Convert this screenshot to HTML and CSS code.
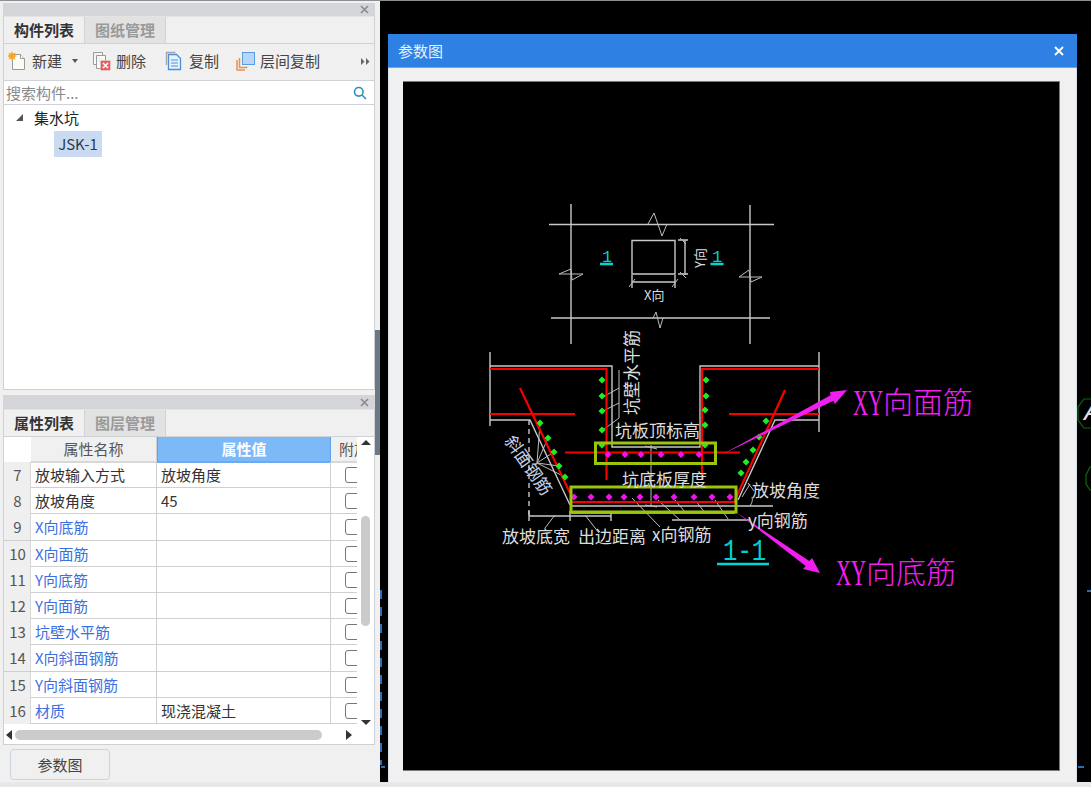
FILE: index.html
```html
<!DOCTYPE html>
<html lang="zh-CN">
<head>
<meta charset="utf-8">
<title>参数图</title>
<link rel="stylesheet" href="styles.css">
</head>
<body>
<div class="app">
  <div class="main">
    <aside class="left">
      <section class="panel panel-top">
        <div class="strip"><svg class="close" viewBox="0 0 9 9"><path d="M1 1l7 7M8 1l-7 7"/></svg></div>
        <div class="tabs"><div class="tab on">构件列表</div><div class="tab off">图纸管理</div></div>
        <div class="toolbar">
          <svg class="ic ic-new" viewBox="0 0 20 20"><path class="doc" d="M4.500 3.500h8l4 4v11h-12z"/><path class="doc" d="M12.500 3.500v4h4"/><path class="star" d="M4 0l1 2.500 2.500-1-1 2.500 2.500 1-2.500 1 1 2.500-2.500-1-1 2.500-1-2.500-2.500 1 1-2.500-2.500-1 2.500-1-1-2.500 2.500 1z"/></svg>
          <span class="tl t-new">新建</span>
          <i class="caret"></i>
          <svg class="ic ic-del" viewBox="0 0 20 20"><path class="doc" d="M1.500 1.500h9v3"/><path class="doc" d="M1.500 1.500v12h3"/><path class="doc" d="M4.500 4.500h9v5M4.500 4.500v13h4"/><rect class="xbox" x="9" y="10" width="9" height="9"/><path class="xmark" d="M11 12l5 5M16 12l-5 5"/></svg>
          <span class="tl t-del">删除</span>
          <svg class="ic ic-copy" viewBox="0 0 20 20"><path class="grey" d="M1.500 14V1.500h9"/><path class="blue" d="M3.500 3.500h8l4 4v11h-12z"/><path class="blue thin" d="M6 9h7M6 12h7M6 15h7"/></svg>
          <span class="tl t-copy">复制</span>
          <svg class="ic ic-floor" viewBox="0 0 20 20"><path class="orange" d="M1 9v10h8M3.500 7v9.500h8"/><rect class="bsq" x="6.500" y="1.500" width="12" height="12"/></svg>
          <span class="tl t-floor">层间复制</span>
          <svg class="more" viewBox="0 0 9 7"><path d="M0 0l3.500 3.500-3.500 3.500zM5 0l3.500 3.500-3.500 3.500z"/></svg>
        </div>
        <div class="search">
          <span class="ph">搜索构件...</span>
          <svg class="mag" viewBox="0 0 14 14"><circle cx="5.800" cy="5.800" r="4.300"/><path d="M9 9l4 4"/></svg>
        </div>
        <div class="tree">
          <div class="node"><i class="tri"></i><span>集水坑</span></div>
          <div class="leaf">JSK-1</div>
        </div>
      </section>

      <section class="panel panel-prop">
        <div class="strip strip-prop"><svg class="close" viewBox="0 0 9 9"><path d="M1 1l7 7M8 1l-7 7"/></svg></div>
        <div class="tabs"><div class="tab on">属性列表</div><div class="tab off">图层管理</div></div>
        <div class="grid-wrap">
          <div class="grid">
            <div class="hrow">
              <div class="h-blank"></div>
              <div class="h-name">属性名称</div>
              <div class="h-val">属性值</div>
              <div class="h-att">附加</div>
            </div>
            <div class="row"><div class="n">7</div><div class="k">放坡输入方式</div><div class="v">放坡角度</div><div class="c"><i></i></div></div>
            <div class="row"><div class="n">8</div><div class="k">放坡角度</div><div class="v">45</div><div class="c"><i></i></div></div>
            <div class="row"><div class="n">9</div><div class="k link">X向底筋</div><div class="v"></div><div class="c"><i></i></div></div>
            <div class="row"><div class="n">10</div><div class="k link">X向面筋</div><div class="v"></div><div class="c"><i></i></div></div>
            <div class="row"><div class="n">11</div><div class="k link">Y向底筋</div><div class="v"></div><div class="c"><i></i></div></div>
            <div class="row"><div class="n">12</div><div class="k link">Y向面筋</div><div class="v"></div><div class="c"><i></i></div></div>
            <div class="row"><div class="n">13</div><div class="k link">坑壁水平筋</div><div class="v"></div><div class="c"><i></i></div></div>
            <div class="row"><div class="n">14</div><div class="k link">X向斜面钢筋</div><div class="v"></div><div class="c"><i></i></div></div>
            <div class="row"><div class="n">15</div><div class="k link">Y向斜面钢筋</div><div class="v"></div><div class="c"><i></i></div></div>
            <div class="row"><div class="n">16</div><div class="k link">材质</div><div class="v">现浇混凝土</div><div class="c"><i></i></div></div>
          </div>
          <div class="vscroll"><i class="up"></i><div class="vtrack"><div class="vthumb"></div></div><i class="down"></i></div>
        </div>
        <div class="hscroll"><i class="lf"></i><div class="hthumb"></div><i class="rt"></i></div>
      </section>

      <div class="btn-row"><button class="btn">参数图</button></div>
      <div class="splitter"></div>
    </aside>

    <div class="canvas">
      <svg class="bg" viewBox="380 1 711 781">
        <path class="tick" stroke-dasharray="9 8" d="M381 590V765"/>
        <path class="tick" d="M381 767h4M1078 767h6M1087 591h4"/>
        <path class="hex" d="M1091 399l-7 0-6 8v13l6 8h7"/>
        <path class="hex" d="M1091 467l-1 0-4 8v9l4 6h1"/>
        <text class="cad-a" x="1084" y="420">A</text>
      </svg>
      <div class="dialog">
        <header class="dlg-title"><span>参数图</span><svg class="dlg-x" viewBox="0 0 10 10"><path d="M1 1l8 8M9 1l-8 8"/></svg></header>
        <div class="dlg-body">
          <div class="view">
            <svg class="cad" viewBox="403 81 657 690">
              <defs><path id="dm" d="M0-3.500L3.500 0 0 3.500-3.500 0z"/></defs>

              <g class="ln">
                <path d="M571 204V344M750 205V344M549 224.500H774M551 318H770"/>
                <path d="M632 240.500H675V274H632z"/>
                <path d="M685 240V275M678 240H688M678 274H688M632 275V288M675 275V288M632 282H675"/>
                <path class="hair" d="M680 238l6 6M680 272l6 6M629 287l6-8M672 287l6-8"/>
                <path class="hair" d="M648 224l6-11 8 23 5-12M653 318l3-6 4 16 3-10M559 274l12-5 1 11 11-6M559 274H583M739 277l10-7 2 12 11-5M739 277H762"/>

                <path d="M490 352V426M490 366H612V447H700V366H819M819 352V432"/>
                <path d="M490 420H530L570 505"/>
                <path d="M819 420H775L738 500"/>
                <path d="M529 420V515" stroke-dasharray="5 4"/>
                <path d="M571 506H773M571 513H735M672 520H750M529 516H611M529 511V521M570 511V521M611 511V521"/>
                <path class="hair" d="M619 370V418M603 397l16-9M603 411l16-8M603 430l16-12"/>
                <path class="hair" d="M651 445V506M645 446l12 3M645 505l12 2"/>
                <path class="hair" d="M537 463L540 423M537 463L548 438M537 463L554 452M537 463L559 466M537 463L565 477"/>
                <path class="hair" d="M555 515l-10 13M585 515l14 18M632 498l28 29M658 500l22 20M675 500l10 12M696 501l9 12M715 500l13 19"/>
                <path class="hair" d="M742 497l8-13M748 483l6 8M750 506c2-3 3-6 2-9"/>
              </g>

              <g class="red">
                <path d="M490 369H606.500V480M490 414H575M520 388L570 493M571 502H734L785 390M819 369H702V480M729 414H819M565 452.500H740"/>
              </g>

              <g class="gd">
                <use href="#dm" x="602" y="380"/><use href="#dm" x="602" y="396"/><use href="#dm" x="602" y="411"/><use href="#dm" x="602" y="430"/><use href="#dm" x="602" y="445"/>
                <use href="#dm" x="540" y="423"/><use href="#dm" x="548" y="438"/><use href="#dm" x="554" y="452"/><use href="#dm" x="559" y="466"/><use href="#dm" x="565" y="477"/>
                <use href="#dm" x="706" y="380"/><use href="#dm" x="706" y="396"/><use href="#dm" x="705" y="410"/><use href="#dm" x="705" y="425"/><use href="#dm" x="705" y="445"/>
                <use href="#dm" x="766" y="421"/><use href="#dm" x="759" y="437"/><use href="#dm" x="753" y="450"/><use href="#dm" x="746" y="462"/><use href="#dm" x="741" y="473"/>
              </g>
              <g class="mg">
                <use href="#dm" x="608" y="454.500"/><use href="#dm" x="625" y="454.500"/><use href="#dm" x="641" y="454.500"/><use href="#dm" x="661" y="454.500"/><use href="#dm" x="681" y="454.500"/><use href="#dm" x="699" y="454.500"/>
                <use href="#dm" x="574" y="497"/><use href="#dm" x="591" y="497"/><use href="#dm" x="609" y="497"/><use href="#dm" x="624" y="497"/><use href="#dm" x="640" y="497"/><use href="#dm" x="656" y="497"/><use href="#dm" x="674" y="497"/><use href="#dm" x="694" y="497"/><use href="#dm" x="712" y="497"/><use href="#dm" x="730" y="497"/>
              </g>

              <g class="gbox">
                <rect x="595.500" y="443" width="120" height="20.500"/>
                <rect x="571" y="487" width="165" height="25"/>
              </g>

              <g class="arrow">
                <path d="M722 454.500L830.600 395.300 830 392 847 390 835 404 833.400 400.700z"/>
                <path d="M736 512L809.300 561 812 558 820 573 803 569 805.700 566z"/>
              </g>

              <g class="cy">
                <path d="M600 264H613M710.500 264H723.500M717 564H769"/>
              </g>
              <text class="t-cy" x="602" y="262">1</text>
              <text class="t-cy" x="712" y="262">1</text>
              <text class="t-cy t-big" transform="translate(723 560) scale(1 1.25)">1-1</text>

              <text class="t t-s" x="644" y="300">X向</text>
              <text class="t t-s" transform="translate(705 268) rotate(-90)">Y向</text>
              <text class="t" transform="translate(638 415) rotate(-90)">坑壁水平筋</text>
              <text class="t" x="615" y="437">坑板顶标高</text>
              <text class="t" x="622" y="486">坑底板厚度</text>
              <text class="t" x="752" y="497">放坡角度</text>
              <text class="t" x="748" y="527">y向钢筋</text>
              <text class="t" x="502" y="543">放坡底宽</text>
              <text class="t" x="578" y="543">出边距离</text>
              <text class="t" x="652" y="541">x向钢筋</text>
              <text class="t t-rot" transform="translate(504 441) rotate(55)">斜面钢筋</text>

              <text class="t-mg t-lat" transform="translate(853 415) scale(0.58 1)">XY</text>
              <text class="t-mg" x="883" y="413">向面筋</text>
              <text class="t-mg t-lat" transform="translate(836 585) scale(0.58 1)">XY</text>
              <text class="t-mg" x="866" y="583">向底筋</text>
            </svg>
          </div>
        </div>
      </div>
    </div>
  </div>
  <div class="foot"></div>
</div>
</body>
</html>
```
FILE: styles.css
```css
* { box-sizing: border-box; }
html, body { margin: 0; padding: 0; height: 100%; }
body { overflow: hidden; background: #f0f0f0; color: #333; font-family: "Noto Sans CJK SC", "Noto Sans", sans-serif; font-size: 15px; }

.app { width: 1091px; height: 787px; display: flex; flex-direction: column; border-top: 1px solid #8b8f93; }
.main { flex: 1; display: flex; min-height: 0; }
.foot { height: 5px; background: #e8e8e8; }

/* left column */
.left { position: relative; width: 380px; flex: none; padding: 2px 5px 0 3px; display: flex; flex-direction: column; gap: 5px; background: #f0f0f0; }
.panel { border: 1px solid #cdd0d4; border-top: 0; display: flex; flex-direction: column; background: #fff; }
.panel-top { height: 387px; }
.panel-prop { height: 350px; }
.strip { height: 13px; margin: 0 -1px; background: #d3d5d9; display: flex; justify-content: flex-end; align-items: center; padding-right: 6px; flex: none; }
.strip-prop { height: 14px; }
.close { width: 9px; height: 9px; }
.close path { stroke: #8a8a8a; stroke-width: 1.6; fill: none; }

.tabs { height: 28px; display: flex; flex: none; background: #f0f0f0; border-top: 1px solid #e4e4e4; border-bottom: 1px solid #cfd2d6; }
.tab { width: 81px; display: flex; align-items: center; justify-content: center; border-right: 1px solid #cfd2d6; font-size: 15px; line-height: 20px; }
.tab.on { color: #333; font-weight: 700; }
.tab.off { background: #e2e2e2; color: #9a9a9a; font-weight: 700; }

.toolbar { height: 37px; flex: none; display: flex; align-items: center; background: #f0f0f0; border-bottom: 1px solid #cfd2d6; padding: 0 0 2px 4px; position: relative; color: #444; }
.ic { width: 20px; height: 20px; flex: none; }
.tl { line-height: 20px; }
.t-new { margin-left: 4px; }
.caret { width: 0; height: 0; border: 3.5px solid transparent; border-top: 4px solid #555; border-bottom: 0; margin-left: 10px; }
.ic-del { margin-left: 14px; }
.t-del { margin-left: 4px; }
.ic-copy { margin-left: 19px; }
.t-copy { margin-left: 4px; }
.ic-floor { margin-left: 17px; }
.t-floor { margin-left: 4px; }
.more { width: 9px; height: 7px; margin-left: 41px; fill: #666; }
.doc { fill: #fbfbf6; stroke: #9a9a9a; stroke-width: 1; }
.star { fill: #f6a623; }
.xbox { fill: #e8656a; stroke: #c44; stroke-width: .5; }
.xmark { stroke: #fff; stroke-width: 1.4; fill: none; }
.grey { stroke: #a6a6a6; stroke-width: 1.4; fill: none; }
.blue { stroke: #4a90d9; stroke-width: 1.3; fill: #eaf3fc; }
.blue.thin { stroke-width: 1; fill: none; }
.orange { stroke: #ef8f4c; stroke-width: 1.5; fill: none; }
.bsq { fill: #b5d6fa; stroke: #5b9be0; stroke-width: 1; }

.search { height: 24px; flex: none; display: flex; align-items: center; justify-content: space-between; padding: 0 7px 0 2px; border-bottom: 1px solid #cfd2d6; background: #fff; }
.ph { color: #8a8a8a; line-height: 20px; }
.mag { width: 14px; height: 14px; }
.mag circle, .mag path { fill: none; stroke: #2a8fc4; stroke-width: 1.6; }

.tree { flex: 1; background: #fff; }
.node { height: 26px; display: flex; align-items: center; padding: 0 0 2px 12px; color: #222; }
.tri { width: 0; height: 0; border-style: solid; border-width: 0 0 7px 7px; border-color: transparent transparent #555 transparent; margin-right: 11px; }
.leaf { width: 48px; height: 26px; margin: 0 0 0 50px; padding-bottom: 2px; background: #c9daf1; display: flex; align-items: center; justify-content: center; color: #2c3a4c; }

/* property grid */
.grid-wrap { flex: 1; display: flex; min-height: 0; background: #fff; }
.grid { width: 353px; flex: none; overflow: hidden; }
.hrow, .row { display: grid; grid-template-columns: 27px 126px 174px 40px; }
.hrow { height: 25px; line-height: 24px; }
.h-blank { background: #fff; }
.h-name { background: #f0f0f0; text-align: center; color: #555; border-right: 1px solid #d0d0d0; border-bottom: 2px solid #d8d8d8; }
.h-val { background: #7db8f7; color: #fff; text-align: center; font-weight: 700; border: 1px solid #5ea3ec; border-top: 0; border-bottom: 2px solid #6aaaf0; }
.h-att { background: #f0f0f0; color: #555; padding-left: 8px; white-space: nowrap; border-bottom: 2px solid #d8d8d8; }
.row { height: 26.2px; line-height: 26px; border-bottom: 1px solid #cfcfcf; color: #333; }
.n { background: #efefef; text-align: center; color: #555; border-right: 1px solid #d8d8d8; padding-left: 1px; }
.k { padding-left: 4px; border-right: 1px solid #cfcfcf; white-space: nowrap; }
.k.link { color: #3b70e0; }
.v { padding-left: 4px; border-right: 1px solid #cfcfcf; color: #333; }
.c { padding: 5px 0 0 14px; }
.c i { display: block; width: 16px; height: 16px; border: 1px solid #777; border-radius: 3px; background: #fff; }

.vscroll { flex: 1; display: flex; flex-direction: column; align-items: center; padding-top: 3px; }
.vscroll i { width: 0; height: 0; border: 5px solid transparent; flex: none; }
.up { border-bottom: 5px solid #333 !important; border-top: 0 !important; }
.down { border-top: 5px solid #333 !important; border-bottom: 0 !important; }
.vtrack { flex: 1; width: 9px; padding-top: 71px; }
.vthumb { height: 110px; border-radius: 5px; background: #cbcbcb; }
.hscroll { height: 19px; flex: none; display: flex; align-items: center; padding: 0 22px 0 2px; background: #fff; }
.hscroll i { width: 0; height: 0; border: 5px solid transparent; flex: none; }
.lf { border-right: 6px solid #333 !important; border-left: 0 !important; }
.rt { border-left: 6px solid #333 !important; border-right: 0 !important; margin-left: 24px; }
.hthumb { width: 307px; height: 10px; border-radius: 5px; background: #cbcbcb; margin-left: 3px; }

.btn-row { padding: 0 0 0 7px; margin-top: -1px; }
.btn { width: 100px; height: 31px; font: inherit; color: #444; background: #f0f0f0; border: 1px solid #ccd3e0; border-radius: 4px; padding: 0; }

.splitter { position: absolute; right: 0; top: 329px; width: 5px; height: 125px; background: #6b7885; }

/* CAD background */
.canvas { flex: 1; position: relative; background: #000; padding: 33px 14px 0 8px; display: flex; min-width: 0; }
.bg { position: absolute; left: 0; top: 0; width: 711px; height: 781px; }
.tick { stroke: #2a6fb5; stroke-width: 2; fill: none; }
.hex { stroke: #0a6b0a; stroke-width: 1.2; fill: none; }
.cad-a { fill: #ddd; font-family: "Liberation Sans", sans-serif; font-style: italic; font-size: 26px; }

.dialog { position: relative; flex: 1; display: flex; flex-direction: column; background: #f0f0f0; border-left: 1px solid #d8e0ea; border-right: 1px solid #d8e0ea; }
.dlg-title { height: 34px; flex: none; background: #2e81e2; border-bottom: 1px solid #6aa6ec; margin: 0 -1px; padding: 0 13px 0 10px; color: #e8f1fc; display: flex; align-items: center; justify-content: space-between; line-height: 20px; }
.dlg-x { width: 10px; height: 10px; }
.dlg-x path { stroke: #fff; stroke-width: 1.8; fill: none; }
.dlg-body { flex: 1; padding: 13px 16px 11px 14px; display: flex; min-height: 0; }
.view { flex: 1; background: #000; box-shadow: inset 0 1px #7a7a7a, inset -1px 0 #7a7a7a, inset 0 -1px #7a7a7a; display: flex; }
.cad { width: 100%; height: 100%; display: block; }

.ln path { stroke: #c8c8c8; stroke-width: 1.4; fill: none; }
.ln .hair { stroke: #bdbdbd; stroke-width: 1; }
.red path { stroke: #f60000; stroke-width: 2.2; fill: none; }
.gd { fill: #19f01e; }
.mg { fill: #f012f0; }
.gbox rect { fill: none; stroke: #9cc408; stroke-width: 3; }
.arrow path { fill: #f01ef0; }
.cy path { stroke: #00d8d8; stroke-width: 2.4; fill: none; }
.t-cy { fill: #00d0d0; font-family: "Liberation Mono", monospace; font-size: 17px; }
.t-big { font-size: 24px; }
.t { fill: #dcdcdc; font-family: "Noto Sans CJK SC", sans-serif; font-size: 17px; }
.t-s { font-size: 13px; }
.t-rot { fill: #c4d2e8; }
.t-mg { fill: #f01ef0; font-family: "Noto Sans CJK SC", sans-serif; font-size: 30px; font-weight: 300; }
.t-lat { font-family: "Liberation Serif", serif; font-size: 36px; font-weight: 400; }
```
